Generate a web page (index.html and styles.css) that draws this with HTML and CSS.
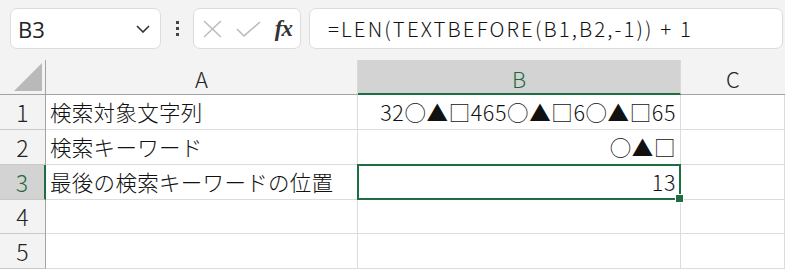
FILE: index.html
```html
<!DOCTYPE html>
<html lang="ja">
<head>
<meta charset="utf-8">
<link rel="stylesheet" href="styles.css">
</head>
<body>
<div class="app">
  <div class="toolbar">
    <div class="namebox">
      <span class="name">B3</span>
      <svg class="chev" width="14" height="8" viewBox="0 0 14 8"><path d="M1 1 L7 7 L13 1" fill="none" stroke="#333" stroke-width="1.6"/></svg>
    </div>
    <div class="dots"><i></i><i></i><i></i></div>
    <div class="btns">
      <svg class="ico" width="19" height="18" viewBox="0 0 19 18"><path d="M1 1 L18 17 M18 1 L1 17" stroke="#bdbdbd" stroke-width="1.6" fill="none"/></svg>
      <svg class="ico" width="25" height="16" viewBox="0 0 25 16"><path d="M1 8 L8 15 L24 1" stroke="#bdbdbd" stroke-width="1.6" fill="none"/></svg>
      <span class="fx">fx</span>
    </div>
    <div class="formula">=LEN(TEXTBEFORE(B1,B2,-1)) + 1</div>
  </div>
  <div class="grid">
    <div class="corner"><span class="tri"></span></div>
    <div class="colhead">A</div>
    <div class="colhead sel">B</div>
    <div class="colhead last">C</div>

    <div class="rowhead">1</div>
    <div class="cell">検索対象文字列</div>
    <div class="cell num">32○▲□465○▲□6○▲□65</div>
    <div class="cell"></div>

    <div class="rowhead">2</div>
    <div class="cell">検索キーワード</div>
    <div class="cell num">○▲□</div>
    <div class="cell"></div>

    <div class="rowhead sel">3</div>
    <div class="cell">最後の検索キーワードの位置</div>
    <div class="cell num active">13<span class="handle"></span></div>
    <div class="cell"></div>

    <div class="rowhead">4</div>
    <div class="cell"></div>
    <div class="cell"></div>
    <div class="cell"></div>

    <div class="rowhead">5</div>
    <div class="cell"></div>
    <div class="cell"></div>
    <div class="cell"></div>
  </div>
</div>
</body>
</html>
```
FILE: styles.css
```css
html, body {
  margin: 0;
  padding: 0;
  background: #ffffff;
  overflow: hidden;
}
.app {
  width: 785px;
  height: 269px;
  font-family: "Noto Sans CJK JP", "Noto Sans", sans-serif;
  font-weight: 300;
  color: #000;
}
.toolbar {
  height: 60px;
  background: #f3f3f3;
  display: flex;
  align-items: flex-start;
  padding: 8px 0 0 10px;
  box-sizing: border-box;
}
.namebox, .btns, .formula {
  background: #fff;
  border: 1px solid #dcdcdc;
  border-radius: 7px;
  height: 41px;
  box-sizing: border-box;
}
.namebox {
  width: 151px;
  display: flex;
  align-items: center;
  justify-content: space-between;
  padding: 0 10px 0 7px;
}
.name {
  font-family: "Open Sans", "Noto Sans", sans-serif;
  font-weight: 400;
  font-size: 22px;
  color: #222;
  line-height: 1;
}
.dots {
  width: 32px;
  height: 41px;
  display: flex;
  flex-direction: column;
  align-items: center;
  justify-content: center;
  gap: 3px;
}
.dots i {
  display: block;
  width: 3px;
  height: 3px;
  background: #444;
}
.btns {
  width: 108px;
  display: flex;
  align-items: center;
  padding: 0 8px 0 9px;
  gap: 14px;
}
.fx {
  font-family: "Liberation Serif", "DejaVu Serif", serif;
  font-style: italic;
  font-weight: bold;
  font-size: 23px;
  color: #333;
  line-height: 1;
  letter-spacing: -1px;
}
.formula {
  margin-left: 8px;
  width: 474px;
  display: flex;
  align-items: center;
  padding-left: 18px;
  font-size: 20.5px;
  letter-spacing: 2.1px;
  line-height: 1;
  color: #111;
  white-space: nowrap;
}
.grid {
  display: grid;
  grid-template-columns: 46px 312px 323px 104px;
  grid-template-rows: 35px 35px 35px 35px 34px 35px;
  background: #fff;
}
.corner {
  background: #f3f3f3;
  border-right: 1px solid #a3a3a3;
  border-bottom: 1px solid #a3a3a3;
  box-sizing: border-box;
  position: relative;
}
.tri {
  position: absolute;
  right: 3px;
  bottom: 3px;
  width: 0;
  height: 0;
  border-left: 28px solid transparent;
  border-bottom: 28px solid #b9b9b9;
}
.colhead {
  background: #f3f3f3;
  border-bottom: 1px solid #a3a3a3;
  border-right: 1px solid #d9d9d9;
  box-sizing: border-box;
  display: flex;
  align-items: center;
  justify-content: center;
  font-size: 22px;
  line-height: 1;
  color: #222;
  padding-top: 2px;
}
.colhead.last { border-right: none; }
.colhead.sel {
  background: #d3d3d3;
  color: #1d6b3d;
  border-bottom: 2px solid #1e6e42;
}
.rowhead {
  background: #f3f3f3;
  border-right: 1px solid #a3a3a3;
  border-bottom: 1px solid #c8c8c8;
  box-sizing: border-box;
  display: flex;
  align-items: center;
  justify-content: center;
  font-size: 23px;
  line-height: 1;
  color: #222;
}
.rowhead.sel {
  background: #d3d3d3;
  color: #1d6b3d;
  border-right: 2px solid #1e6e42;
}
.cell {
  border-right: 1px solid #dcdcdc;
  border-bottom: 1px solid #dcdcdc;
  box-sizing: border-box;
  display: flex;
  align-items: center;
  padding: 0 4px;
  font-size: 21.5px;
  letter-spacing: 0.3px;
  line-height: 1;
  white-space: nowrap;
  color: #111;
}
.cell.num {
  justify-content: flex-end;
  letter-spacing: 0.6px;
}
.cell.active {
  position: relative;
}
.cell.active::after {
  content: "";
  position: absolute;
  left: -1px;
  top: -1px;
  right: -1px;
  bottom: -1px;
  border: 2px solid #1e6e42;
  pointer-events: none;
}
.handle {
  position: absolute;
  right: -4px;
  bottom: -4px;
  width: 7px;
  height: 7px;
  background: #1e6e42;
  border: 1px solid #fff;
  z-index: 2;
}
```
